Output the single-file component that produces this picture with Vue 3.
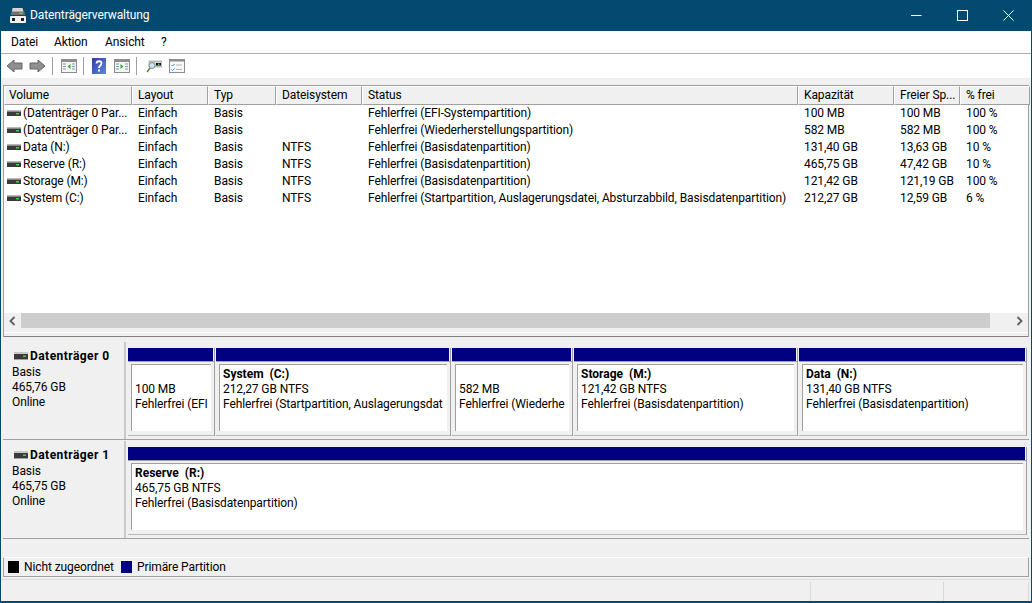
<script setup>
const cols = [
  { t: 'Volume', w: 128 }, { t: 'Layout', w: 76 }, { t: 'Typ', w: 68 }, { t: 'Dateisystem', w: 86 },
  { t: 'Status', w: 436 }, { t: 'Kapazität', w: 96 }, { t: 'Freier Sp...', w: 66 }, { t: '% frei', w: 70 }
]
const gridCols = cols.map(c => c.w + 'px').join(' ')
const rows = [
  ['(Datenträger 0 Par...', 'Einfach', 'Basis', '', 'Fehlerfrei (EFI-Systempartition)', '100 MB', '100 MB', '100 %'],
  ['(Datenträger 0 Par...', 'Einfach', 'Basis', '', 'Fehlerfrei (Wiederherstellungspartition)', '582 MB', '582 MB', '100 %'],
  ['Data (N:)', 'Einfach', 'Basis', 'NTFS', 'Fehlerfrei (Basisdatenpartition)', '131,40 GB', '13,63 GB', '10 %'],
  ['Reserve (R:)', 'Einfach', 'Basis', 'NTFS', 'Fehlerfrei (Basisdatenpartition)', '465,75 GB', '47,42 GB', '10 %'],
  ['Storage (M:)', 'Einfach', 'Basis', 'NTFS', 'Fehlerfrei (Basisdatenpartition)', '121,42 GB', '121,19 GB', '100 %'],
  ['System (C:)', 'Einfach', 'Basis', 'NTFS', 'Fehlerfrei (Startpartition, Auslagerungsdatei, Absturzabbild, Basisdatenpartition)', '212,27 GB', '12,59 GB', '6 %']
]
const parts0 = [
  { w: 87, name: '', l2: '100 MB', l3: 'Fehlerfrei (EFI' },
  { w: 235, name: 'System  (C:)', l2: '212,27 GB NTFS', l3: 'Fehlerfrei (Startpartition, Auslagerungsdat' },
  { w: 121, name: '', l2: '582 MB', l3: 'Fehlerfrei (Wiederhe' },
  { w: 224, name: 'Storage  (M:)', l2: '121,42 GB NTFS', l3: 'Fehlerfrei (Basisdatenpartition)' },
  { w: 228, name: 'Data  (N:)', l2: '131,40 GB NTFS', l3: 'Fehlerfrei (Basisdatenpartition)' }
]
const reserve = 'Reserve  (R:)'
</script>

<template>
  <div class="win">
    <header class="title">
      <svg class="appicon" width="17" height="17" viewBox="0 0 17 17">
        <path d="M3.500 1h10l2 7h-13z" fill="#d4d4d4" />
        <rect x="2.500" y="4.500" width="13" height="3.500" fill="#6f6f6f" />
        <rect x="10.500" y="5.500" width="3" height="1.500" fill="#3fe04a" />
        <rect x="1" y="9" width="16" height="7" rx="1" fill="#f2f2f2" />
        <rect x="3" y="11" width="3" height="3" fill="#222" />
        <rect x="12" y="11" width="3" height="3" fill="#222" />
      </svg>
      <span class="title-text">Datenträgerverwaltung</span>
      <div class="caps">
        <span class="cap"><svg width="11" height="11" viewBox="0 0 11 11"><path d="M0 5.500h10.500" stroke="#fff" /></svg></span>
        <span class="cap"><svg width="11" height="11" viewBox="0 0 11 11"><rect x=".5" y=".5" width="10" height="10" fill="none" stroke="#fff" /></svg></span>
        <span class="cap"><svg width="11" height="11" viewBox="0 0 11 11"><path d="M.5.500l10 10M10.500.500l-10 10" stroke="#fff" fill="none" /></svg></span>
      </div>
    </header>
    <nav class="menu">
      <span class="m1">Datei</span><span class="m2">Aktion</span><span class="m3">Ansicht</span><span>?</span>
    </nav>
    <div class="toolbar">
      <svg width="17" height="16" viewBox="0 0 17 16"><path d="M1 8l7-6v3h8v6H8v3z" fill="#8f8f8f" stroke="#646464" /></svg>
      <svg class="next" width="17" height="16" viewBox="0 0 17 16"><path d="M16 8L9 2v3H1v6h8v3z" fill="#8f8f8f" stroke="#646464" /></svg>
      <i class="sep s1"></i>
      <svg class="t-panel" width="16" height="14" viewBox="0 0 16 14">
        <rect x=".5" y=".5" width="15" height="13" fill="#f4f4f4" stroke="#8c8c8c" /><rect x="1" y="1" width="14" height="2" fill="#8c8c8c" />
        <path d="M2 5h3M2 7.500h3M2 10h3M11 5h3M11 7.500h3M11 10h3" stroke="#7f98aa" /><path d="M9.500 5v5L6.500 7.500z" fill="#2fae3c" />
      </svg>
      <i class="sep s2"></i>
      <svg class="t-help" width="14" height="16" viewBox="0 0 14 16">
        <defs><linearGradient id="hg" x1="0" y1="0" x2="1" y2="1"><stop offset="0" stop-color="#2f3f9f" /><stop offset="1" stop-color="#5f88e0" /></linearGradient></defs>
        <rect width="14" height="16" fill="url(#hg)" />
        <path d="M4.500 5.500c0-3 5-3 5 0 0 2-2.500 2-2.500 4.500" fill="none" stroke="#fff" stroke-width="1.800" /><rect x="6" y="11.500" width="2" height="2" fill="#fff" />
      </svg>
      <svg class="t-panel2" width="16" height="14" viewBox="0 0 16 14">
        <rect x=".5" y=".5" width="15" height="13" fill="#f4f4f4" stroke="#8c8c8c" /><rect x="1" y="1" width="14" height="2" fill="#8c8c8c" />
        <path d="M2 5h3M2 7.500h3M2 10h3M11 5h3M11 7.500h3M11 10h3" stroke="#7f98aa" /><path d="M6.500 5v5l3-2.500z" fill="#2fae3c" />
      </svg>
      <i class="sep s3"></i>
      <svg class="t-scan" width="16" height="14" viewBox="0 0 16 14">
        <rect x="3" y="2" width="13" height="6" fill="#cfcfcf" stroke="#8f8f8f" stroke-width=".6" /><rect x="10" y="4" width="5" height="2.500" fill="#111" /><rect x="12" y="4.500" width="1.500" height="1.500" fill="#3fe04a" />
        <circle cx="6" cy="6.500" r="3" fill="#cfe4f2" stroke="#7a8a96" /><path d="M4 9l-3 4" stroke="#6b7f3a" stroke-width="1.500" />
      </svg>
      <svg class="t-check" width="16" height="14" viewBox="0 0 16 14">
        <rect x=".5" y=".5" width="15" height="13" fill="#f8f8f8" stroke="#8c8c8c" /><rect x="1" y="1" width="14" height="1.500" fill="#8c8c8c" />
        <path d="M2.500 6l1 1 2-2M2.500 10.500l1 1 2-2" fill="none" stroke="#2f7fd8" /><path d="M7 6h6M7 10.500h6" stroke="#b5b5b5" />
      </svg>
    </div>

    <main class="body">
      <section class="list">
        <div class="thead" :style="{ gridTemplateColumns: gridCols }">
          <div v-for="c in cols" :key="c.t" class="th">{{ c.t }}</div>
        </div>
        <div class="tbody">
          <div v-for="(r, i) in rows" :key="i" class="tr" :style="{ gridTemplateColumns: gridCols }">
            <div v-for="(v, j) in r" :key="j" class="td">
              <svg v-if="j === 0" class="drive" width="14" height="6" viewBox="0 0 14 6">
                <rect width="14" height="1.500" fill="#b8b8b8" /><rect y="1.500" width="14" height="4.500" fill="#3a3a3a" /><rect x="9" y="3" width="3" height="1.500" fill="#38d34a" />
              </svg>{{ v }}
            </div>
          </div>
        </div>
        <div class="hscroll">
          <span class="arrow"><svg width="7" height="10" viewBox="0 0 7 10"><path d="M5.500 1L1.500 5l4 4" fill="none" stroke="#606060" stroke-width="1.800" /></svg></span>
          <span class="thumb"></span>
          <span class="arrow"><svg width="7" height="10" viewBox="0 0 7 10"><path d="M1.500 1l4 4-4 4" fill="none" stroke="#606060" stroke-width="1.800" /></svg></span>
        </div>
        <div class="listfoot"><div class="footline"></div></div>
      </section>

      <section class="disks">
        <div class="disk">
          <div class="dinfo">
            <div class="dname">
              <svg class="ddrive" width="14" height="8" viewBox="0 0 14 8"><rect width="14" height="2" fill="#c8c8c8" /><rect y="2" width="14" height="5" fill="#3a3a3a" /><rect x="9" y="3.500" width="3" height="1.500" fill="#38d34a" /><rect y="7" width="14" height="1" fill="#a0a0a0" /></svg>
              <b>Datenträger 0</b>
            </div>
            <div>Basis</div><div>465,76 GB</div><div>Online</div>
          </div>
          <div class="parts">
            <div v-for="p in parts0" :key="p.l2" class="part" :style="{ width: p.w + 'px' }">
              <div class="bar"></div>
              <div class="box">
                <div class="inner">
                  <div class="pname">{{ p.name }}</div>
                  <div>{{ p.l2 }}</div>
                  <div>{{ p.l3 }}</div>
                </div>
              </div>
            </div>
          </div>
        </div>
        <div class="disk">
          <div class="dinfo">
            <div class="dname">
              <svg class="ddrive" width="14" height="8" viewBox="0 0 14 8"><rect width="14" height="2" fill="#c8c8c8" /><rect y="2" width="14" height="5" fill="#3a3a3a" /><rect x="9" y="3.500" width="3" height="1.500" fill="#38d34a" /><rect y="7" width="14" height="1" fill="#a0a0a0" /></svg>
              <b>Datenträger 1</b>
            </div>
            <div>Basis</div><div>465,75 GB</div><div>Online</div>
          </div>
          <div class="parts">
            <div class="part wide">
              <div class="bar"></div>
              <div class="box">
                <div class="inner">
                  <div class="pname">{{ reserve }}</div>
                  <div>465,75 GB NTFS</div>
                  <div>Fehlerfrei (Basisdatenpartition)</div>
                </div>
              </div>
            </div>
          </div>
        </div>
        <div class="spacer"></div>
        <div class="legend">
          <i class="swatch black"></i><span class="lg1">Nicht zugeordnet</span>
          <i class="swatch navy"></i><span>Primäre Partition</span>
        </div>
      </section>
    </main>
    <footer class="status">
      <i class="cell"></i><i class="cell"></i><i class="cell"></i>
    </footer>
  </div>
</template>

<style>
html, body { margin: 0; padding: 0; overflow: hidden; }
</style>

<style scoped>
.win {
  width: 1032px; height: 603px; box-sizing: border-box; border: 1px solid #044a70; border-top: 0; border-bottom-width: 2px;
  background: #f0f0f0; display: flex; flex-direction: column; overflow: hidden;
  font: 12px/17px Roboto, "Noto Sans", sans-serif; letter-spacing: -0.1px; color: #000;
}
.title { height: 31px; background: #044a70; display: flex; align-items: center; color: #fff; flex: none; }
.appicon { margin-left: 8px; }
.title-text { margin-left: 4px; }
.caps { margin-left: auto; display: flex; }
.cap { width: 46px; height: 31px; display: flex; align-items: center; justify-content: center; }
.menu { height: 22px; background: #fff; display: flex; align-items: center; padding-left: 10px; border-bottom: 1px solid #b0b0b8; flex: none; }
.m1 { width: 43px; }
.m2 { width: 51px; }
.m3 { width: 56px; }
.toolbar { height: 24px; background: #fff; display: flex; align-items: center; padding-left: 5px; flex: none; }
.next { margin-left: 6px; }
.sep { width: 1px; height: 18px; background: #a0a0a0; display: block; }
.s1 { margin: 0 8px 0 6px; }
.t-panel { margin-right: 6px; }
.s2 { margin-right: 8px; }
.t-help { margin-right: 8px; }
.t-panel2 { margin-right: 6px; }
.s3 { margin-right: 9px; }
.t-check { margin-left: 7px; }
.body { flex: 1; display: flex; flex-direction: column; padding: 7px 2px 0; min-height: 0; }
.list { height: 252px; background: #fff; flex: none; border-top: 1px solid #a0a0a0; border-left: 1px solid #a0a0a0; border-right: 1px solid #a0a0a0; display: flex; flex-direction: column; box-sizing: border-box; }
.thead { display: grid; height: 19px; flex: none; }
.th { background: #f0f0f0; border: 1px solid; border-color: #fff #a0a0a0 #a0a0a0 #fff; padding-left: 5px; line-height: 17px; box-sizing: border-box; overflow: hidden; white-space: nowrap; }
.th:first-child { padding-left: 4px; }
.tbody { flex: 1; overflow: hidden; }
.tr { display: grid; height: 17px; }
.td { padding-left: 6px; white-space: nowrap; overflow: hidden; }
.td:first-child { padding-left: 3px; }
.drive { margin-right: 2px; vertical-align: 1px; }
.hscroll { height: 15px; background: #f0f0f0; display: flex; align-items: center; flex: none; }
.arrow { width: 17px; height: 15px; display: flex; align-items: center; justify-content: center; flex: none; }
.thumb { flex: 1; height: 15px; background: #cdcdcd; margin-right: 21px; }
.listfoot { height: 9px; flex: none; background: #f0f0f0; border-bottom: 1px solid #808080; box-sizing: border-box; padding-top: 4px; }
.footline { height: 1px; background: #fff; }
.disks { flex: 1; display: flex; flex-direction: column; padding-top: 5px; min-height: 0; }
.disk { display: flex; flex: none; height: 98px; border-bottom: 1px solid #a0a0a0; box-sizing: border-box; margin-bottom: 1px; }
.dinfo { width: 123px; padding-left: 9px; background: #f0f0f0; border-right: 2px solid #c8c8c8; box-sizing: border-box; line-height: 15px; flex: none; }
.dname { display: flex; align-items: center; height: 17px; margin-top: 6px; }
.ddrive { margin: 0 2px 2px 2px; }
.dname b { font-weight: 700; letter-spacing: .45px; }
.parts { flex: 1; display: flex; padding: 6px 0 3px 2px; }
.part { display: flex; flex-direction: column; flex: none; box-sizing: border-box; padding-right: 1px; border-right: 1px solid #a0a0a0; margin-right: 1px; }
.part.wide { width: 899px; }
.bar { height: 13px; background: #000080; flex: none; }
.box { flex: 1; background: #f0f0f0; border-top: 1px solid #a0a0a0; border-bottom: 1px solid #b8b8b8; margin-right: -1px; padding: 2px 3px 4px 3px; }
.inner { height: 67px; box-sizing: border-box; background: #fff; border-top: 1px solid #a0a0a0; border-left: 1px solid #a0a0a0; padding: 2px 0 0 3px; line-height: 15px; overflow: hidden; white-space: nowrap; }
.pname { font-weight: 700; min-height: 15px; white-space: pre; letter-spacing: 0; }
.spacer { height: 17px; flex: none; }
.legend { height: 20px; background: #f0f0f0; border-top: 1px solid #fff; border-right: 1px solid #a0a0a0; border-bottom: 1px solid #a0a0a0; border-left: 1px solid #a0a0a0; display: flex; align-items: center; padding-left: 4px; box-sizing: border-box; flex: none; }
.swatch { width: 11px; height: 12px; display: block; margin-right: 5px; }
.lg1 { width: 97px; }
.black { background: #000; }
.navy { background: #000080; }
.status { height: 22px; flex: none; display: grid; grid-template-columns: 810px 133px 85px; border-top: 1px solid #ddd; padding: 2px 0 0 0; box-sizing: border-box; }
.cell { display: block; border-right: 1px solid #d8d8d8; }
</style>
